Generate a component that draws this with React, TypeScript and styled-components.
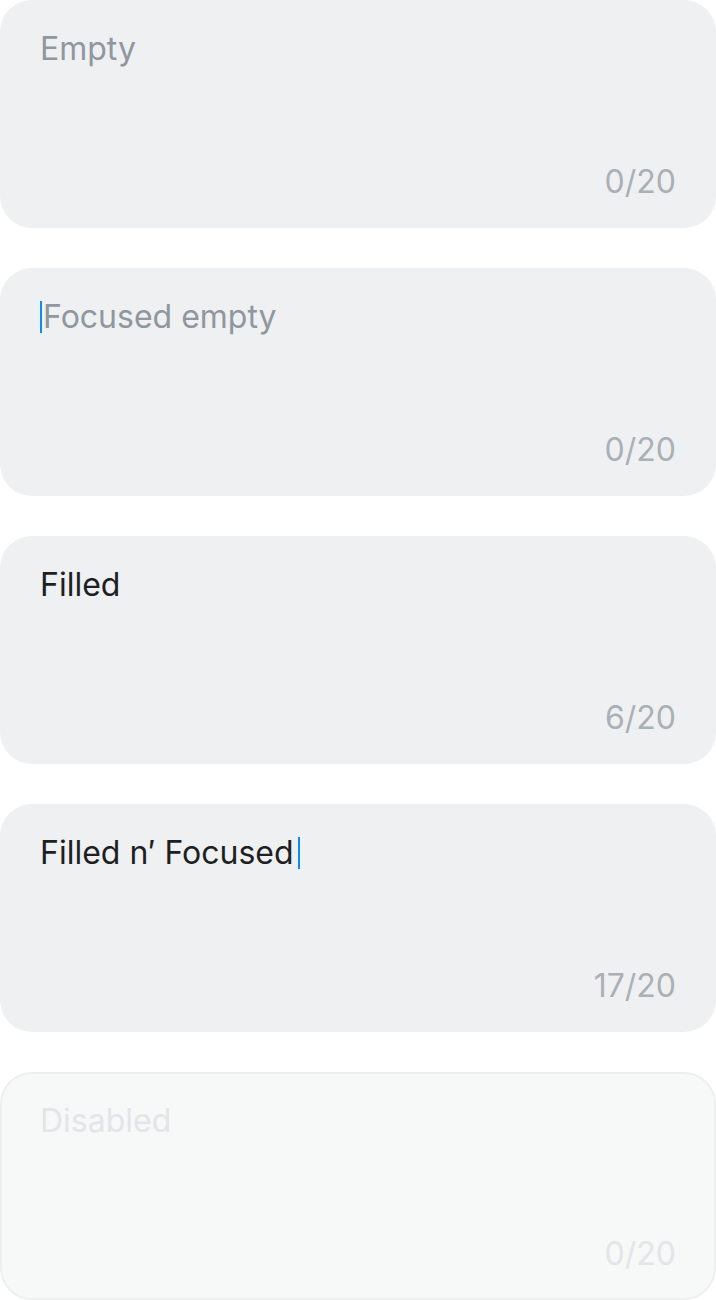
import React from "react";
import styled, { createGlobalStyle, css } from "styled-components";

const Global = createGlobalStyle`
  html, body { margin: 0; padding: 0; background: #ffffff; }
  body { font-family: Inter, "Noto Sans", sans-serif; -webkit-font-smoothing: antialiased; }
`;

const Page = styled.div`
  width: 716px;
  display: flex;
  flex-direction: column;
  gap: 40px;
`;

const Card = styled.div<{ $disabled?: boolean }>`
  box-sizing: border-box;
  height: 228px;
  border-radius: 32px;
  padding: 26px 40px 23px 40px;
  display: flex;
  flex-direction: column;
  justify-content: space-between;
  background: #eff0f2;
  font-size: 32px;
  line-height: 46px;
  ${(p) =>
    p.$disabled &&
    css`
      background: #f7f8f8;
      border: 2px solid #eef0f0;
      padding: 24px 38px 21px 38px;
    `}
`;

const Value = styled.div<{ $tone: "placeholder" | "filled" | "disabled" }>`
  display: flex;
  align-items: center;
  white-space: pre;
  color: ${(p) =>
    p.$tone === "filled" ? "#1d1f22" : p.$tone === "disabled" ? "#e3e5e8" : "#8f979f"};
`;

const Caret = styled.span<{ $start?: boolean }>`
  display: inline-block;
  width: 2px;
  height: 32px;
  background: #0a8cf0;
  margin: ${(p) => (p.$start ? "0 1px 0 0" : "0 0 0 4px")};
`;

const Counter = styled.div<{ $disabled?: boolean }>`
  align-self: flex-end;
  color: ${(p) => (p.$disabled ? "#e3e5e8" : "#aab0b6")};
`;

type Field = {
  text: string;
  tone: "placeholder" | "filled" | "disabled";
  caret?: "start" | "end";
  count: string;
  disabled?: boolean;
};

const fields: Field[] = [
  { text: "Empty", tone: "placeholder", count: "0/20" },
  { text: "Focused empty", tone: "placeholder", caret: "start", count: "0/20" },
  { text: "Filled", tone: "filled", count: "6/20" },
  { text: "Filled n′ Focused", tone: "filled", caret: "end", count: "17/20" },
  { text: "Disabled", tone: "disabled", count: "0/20", disabled: true },
];

export default function App() {
  return (
    <>
      <Global />
      <Page>
        {fields.map((f) => (
          <Card key={f.text} $disabled={f.disabled}>
            <Value $tone={f.tone}>
              {f.caret === "start" && <Caret $start />}
              {f.text}
              {f.caret === "end" && <Caret />}
            </Value>
            <Counter $disabled={f.disabled}>{f.count}</Counter>
          </Card>
        ))}
      </Page>
    </>
  );
}
